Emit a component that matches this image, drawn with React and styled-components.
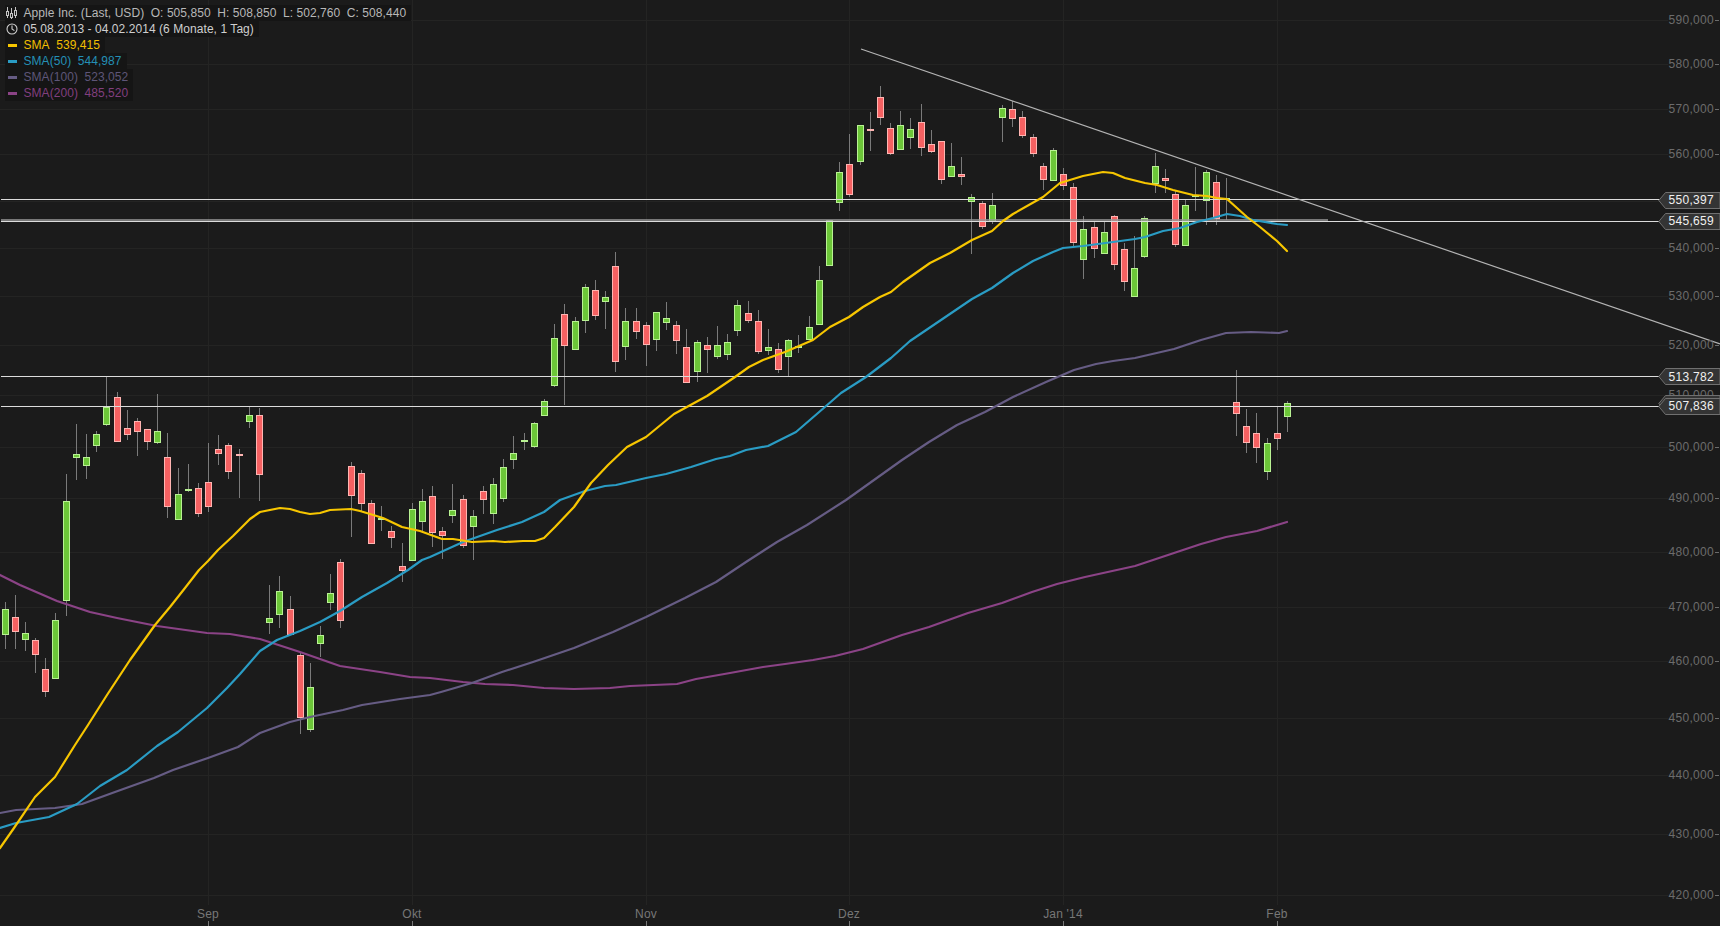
import React from 'react';
import styled, { createGlobalStyle } from 'styled-components';

const UP = 'u';
const DN = 'd';

// x, body top, body bottom, wick top, wick bottom, direction
const candles = [
  [5, 609, 635, 602, 649, UP], [15, 617, 632, 595, 649, DN], [25, 633, 640, 622, 651, UP],
  [35, 640, 655, 638, 673, DN], [45, 669, 692, 658, 697, DN], [55, 620, 679, 613, 679, UP],
  [66, 501, 601, 474, 616, UP], [76, 454, 458, 424, 480, UP], [86, 457, 466, 434, 479, UP],
  [96, 434, 446, 431, 452, UP], [106, 407, 425, 377, 426, UP], [117, 397, 442, 392, 442, DN],
  [127, 428, 435, 410, 440, DN], [137, 421, 432, 418, 456, DN], [147, 429, 442, 429, 450, DN],
  [157, 431, 443, 394, 444, UP], [167, 457, 507, 433, 518, DN], [178, 494, 520, 468, 520, UP],
  [188, 489, 491, 464, 492, UP], [198, 488, 514, 483, 517, DN], [208, 482, 507, 443, 512, DN],
  [218, 449, 454, 435, 465, DN], [228, 445, 472, 443, 479, DN], [239, 454, 456, 449, 498, DN],
  [249, 415, 422, 407, 428, UP], [259, 415, 475, 408, 501, DN], [269, 618, 623, 585, 634, UP],
  [279, 591, 615, 576, 628, UP], [290, 609, 635, 596, 635, DN], [300, 655, 718, 653, 734, DN],
  [310, 687, 730, 663, 732, UP], [320, 635, 644, 626, 657, UP], [330, 593, 603, 574, 610, UP],
  [340, 562, 621, 559, 628, DN], [351, 466, 496, 462, 537, DN], [361, 473, 504, 470, 511, DN],
  [371, 503, 544, 500, 544, DN], [381, 518, 520, 506, 531, UP], [391, 531, 538, 526, 548, DN],
  [402, 566, 571, 543, 582, DN], [412, 509, 561, 503, 561, UP], [422, 501, 522, 489, 533, UP],
  [432, 496, 533, 486, 547, DN], [442, 531, 536, 527, 559, DN], [452, 510, 516, 484, 523, UP],
  [463, 499, 546, 495, 548, DN], [473, 516, 527, 510, 560, UP], [483, 491, 500, 486, 514, DN],
  [493, 484, 514, 478, 524, UP], [503, 467, 499, 459, 502, UP], [513, 453, 460, 436, 469, UP],
  [524, 440, 442, 433, 450, UP], [534, 423, 447, 422, 448, UP], [544, 401, 416, 399, 416, UP],
  [554, 338, 386, 324, 387, UP], [564, 314, 346, 304, 405, DN], [575, 321, 350, 317, 350, UP],
  [585, 287, 321, 284, 333, UP], [595, 290, 316, 280, 320, DN], [605, 297, 302, 291, 329, UP],
  [615, 266, 362, 252, 372, DN], [625, 321, 347, 308, 360, UP], [636, 321, 332, 308, 339, DN],
  [646, 325, 345, 322, 366, DN], [656, 312, 340, 312, 351, UP], [666, 318, 323, 302, 330, UP],
  [676, 325, 341, 321, 354, DN], [686, 347, 383, 329, 383, DN], [697, 342, 372, 340, 382, UP],
  [707, 345, 350, 337, 373, DN], [717, 345, 357, 326, 359, UP], [727, 342, 355, 334, 360, UP],
  [737, 305, 331, 300, 336, UP], [748, 313, 321, 301, 323, DN], [758, 321, 352, 310, 354, DN],
  [768, 347, 351, 329, 355, UP], [778, 349, 370, 343, 373, DN], [788, 340, 357, 339, 376, UP],
  [798, 346, 348, 335, 353, UP], [809, 327, 340, 316, 340, UP], [819, 280, 325, 266, 325, UP],
  [829, 220, 266, 220, 266, UP], [839, 172, 203, 162, 211, UP], [849, 164, 195, 134, 197, DN],
  [860, 125, 162, 125, 165, UP], [870, 129, 131, 112, 151, DN], [880, 97, 118, 86, 125, DN],
  [890, 128, 154, 123, 155, DN], [900, 125, 150, 111, 150, UP], [910, 129, 138, 118, 149, UP],
  [921, 122, 148, 104, 156, DN], [931, 144, 152, 130, 153, DN], [941, 141, 180, 141, 184, DN],
  [951, 166, 177, 143, 177, UP], [961, 174, 177, 157, 185, DN], [971, 197, 202, 194, 254, UP],
  [982, 203, 227, 201, 229, DN], [992, 205, 222, 193, 224, UP], [1002, 108, 118, 105, 142, UP],
  [1012, 109, 119, 101, 127, DN], [1022, 117, 136, 111, 138, DN], [1033, 137, 154, 134, 157, DN],
  [1043, 166, 180, 163, 190, DN], [1053, 150, 181, 148, 181, UP], [1063, 174, 186, 168, 190, DN],
  [1073, 187, 243, 183, 246, DN], [1083, 229, 260, 216, 279, UP], [1094, 227, 249, 221, 258, DN],
  [1104, 232, 254, 221, 254, UP], [1114, 216, 265, 215, 270, DN], [1124, 249, 282, 243, 291, DN],
  [1134, 268, 297, 236, 297, UP], [1144, 218, 257, 216, 258, UP], [1155, 166, 184, 153, 193, UP],
  [1165, 178, 181, 169, 193, DN], [1175, 194, 245, 191, 247, DN], [1185, 205, 246, 199, 246, UP],
  [1195, 195, 197, 167, 211, UP], [1206, 172, 201, 170, 225, UP], [1216, 182, 219, 175, 225, DN],
  [1226, 198, 200, 178, 220, UP], [1236, 402, 414, 370, 436, DN], [1246, 426, 443, 409, 453, DN],
  [1256, 433, 448, 413, 463, DN], [1267, 443, 472, 438, 480, UP], [1277, 433, 439, 407, 450, DN],
  [1287, 403, 417, 401, 432, UP],
];

const sma = [
  0, 848, 14, 828, 35, 797, 55, 777, 75, 745, 88, 725, 107, 695, 130, 660, 155, 625, 170, 607, 185, 588,
  199, 570, 208, 561, 218, 550, 233, 536, 250, 519, 260, 512, 280, 508, 290, 509, 300, 512, 310, 514,
  320, 513, 330, 510, 351, 509, 360, 511, 370, 514, 383, 518, 402, 527, 420, 531, 442, 539, 453, 539,
  472, 542, 493, 541, 505, 542, 523, 541, 535, 541, 544, 538, 555, 527, 574, 507, 591, 483, 608, 465,
  627, 447, 646, 437, 674, 414, 707, 396, 735, 377, 749, 367, 763, 360, 785, 352, 813, 340, 830, 327,
  849, 317, 863, 307, 880, 297, 891, 292, 903, 282, 930, 263, 950, 253, 972, 240, 992, 231, 1003, 221,
  1013, 214, 1043, 197, 1060, 183, 1083, 176, 1103, 172, 1113, 173, 1125, 178, 1145, 183, 1157, 185,
  1173, 190, 1193, 195, 1207, 196, 1217, 198, 1227, 199, 1247, 217, 1260, 227, 1277, 241, 1287, 251,
];

const sma50 = [
  0, 828, 16, 823, 49, 817, 77, 804, 100, 786, 127, 770, 157, 746, 178, 732, 207, 708, 227, 688, 240, 674,
  260, 651, 277, 640, 300, 631, 320, 622, 340, 611, 362, 597, 387, 583, 408, 570, 422, 560, 430, 557,
  463, 542, 497, 530, 522, 522, 544, 512, 560, 500, 585, 491, 605, 486, 616, 485, 646, 478, 666, 474,
  691, 467, 716, 459, 730, 456, 746, 450, 768, 446, 796, 432, 818, 413, 841, 393, 866, 377, 891, 358,
  910, 341, 941, 320, 972, 299, 992, 288, 1013, 273, 1033, 261, 1053, 252, 1063, 248, 1083, 246,
  1113, 242, 1135, 239, 1145, 237, 1163, 231, 1180, 228, 1197, 222, 1213, 218, 1227, 214, 1240, 216,
  1253, 220, 1277, 224, 1287, 225,
];

const sma100 = [
  0, 813, 16, 810, 55, 808, 82, 804, 115, 792, 154, 778, 173, 770, 208, 758, 238, 747, 260, 733, 290, 722,
  310, 717, 343, 710, 362, 705, 400, 699, 430, 695, 441, 692, 472, 683, 502, 672, 533, 662, 574, 648,
  613, 632, 646, 617, 685, 598, 716, 582, 746, 562, 777, 542, 807, 525, 846, 500, 874, 480, 902, 460,
  929, 442, 957, 425, 985, 412, 1013, 397, 1046, 382, 1074, 370, 1096, 364, 1113, 361, 1135, 358,
  1174, 349, 1201, 340, 1226, 333, 1251, 332, 1279, 333, 1287, 331,
];

const sma200 = [
  0, 575, 20, 585, 57, 601, 90, 612, 117, 618, 157, 626, 207, 633, 230, 634, 260, 639, 300, 652, 340, 666,
  380, 672, 410, 677, 430, 678, 463, 682, 485, 684, 513, 685, 544, 688, 574, 689, 610, 688, 630, 686,
  677, 684, 696, 679, 730, 673, 763, 667, 785, 664, 813, 660, 835, 656, 863, 649, 902, 635, 929, 627,
  968, 613, 1002, 603, 1032, 592, 1057, 584, 1085, 577, 1135, 566, 1174, 553, 1201, 544, 1226, 537,
  1257, 531, 1287, 522,
];

const priceLabels = [
  ['590,000', 20], ['580,000', 64], ['570,000', 109], ['560,000', 154], ['540,000', 248],
  ['530,000', 296], ['520,000', 345], ['510,000', 395], ['500,000', 447], ['490,000', 498],
  ['480,000', 552], ['470,000', 607], ['460,000', 661], ['450,000', 718], ['440,000', 775],
  ['430,000', 834], ['420,000', 895],
];

const gridRows = [...priceLabels.map((p) => p[1]), 201];

const months = [
  ['Sep', 208], ['Okt', 412], ['Nov', 646], ['Dez', 849], ["Jan '14", 1063], ['Feb', 1277],
];

const levels = [199.5, 221.5, 376.5, 406.5];

// the tag at 403 is the last price, almost hidden behind 507,836
const tags = [
  ['550,397', 200],
  ['545,659', 221],
  ['513,782', 376.5],
  ['', 403],
  ['507,836', 406],
];

const indicators = [
  { name: 'SMA', value: '539,415', color: '#f2bf00', dash: '#f7c600' },
  { name: 'SMA(50)', value: '544,987', color: '#2490b5', dash: '#2a9cc4' },
  { name: 'SMA(100)', value: '523,052', color: '#5e5578', dash: '#665c84' },
  { name: 'SMA(200)', value: '485,520', color: '#823f7f', dash: '#8b4386' },
];

const toPoints = (list) => {
  const out = [];
  for (let i = 0; i < list.length; i += 2) out.push(`${list[i]},${list[i + 1]}`);
  return out.join(' ');
};

function App() {
  return (
    <>
      <GlobalStyle />
      <Frame>
        <ChartSvg viewBox="0 0 1720 926" width="1720" height="926">
          {gridRows.map((y) => (
            <line key={y} x1="0" x2="1668" y1={y + 0.5} y2={y + 0.5} stroke="#242423" />
          ))}
          {months.map(([m, x]) => (
            <g key={m}>
              <line x1={x + 0.5} x2={x + 0.5} y1="0" y2="905" stroke="#242423" />
              <line x1={x + 0.5} x2={x + 0.5} y1="921" y2="926" stroke="#777" />
            </g>
          ))}

          {candles.map(([x, top, bottom, wickTop, wickBottom, dir]) => (
            <g key={x}>
              <line x1={x + 0.5} x2={x + 0.5} y1={wickTop} y2={wickBottom} stroke="#7a7a7a" />
              <rect
                x={x - 2.5}
                y={top + 0.5}
                width="6"
                height={Math.max(bottom - top - 1, 1)}
                fill={dir === UP ? '#6cc638' : '#f56162'}
                stroke={dir === UP ? '#b9f293' : '#ffb5b2'}
              />
            </g>
          ))}

          <line x1="1" x2="1328" y1="220" y2="220" stroke="#989898" strokeWidth="1.6" />
          {levels.map((y) => (
            <line key={y} x1="1" x2="1660" y1={y} y2={y} stroke="#dcdcdc" />
          ))}
          <line x1="861" y1="49" x2="1720" y2="344" stroke="#b4b4b4" strokeWidth="1.2" />

          <SmaLine points={toPoints(sma200)} stroke="#8b4386" />
          <SmaLine points={toPoints(sma100)} stroke="#665c84" />
          <SmaLine points={toPoints(sma50)} stroke="#2a9cc4" />
          <SmaLine points={toPoints(sma)} stroke="#f7c600" />
        </ChartSvg>

        <Legend>
          <LegendRow>
            <IconSlot>
              <svg width="12" height="12" viewBox="0 0 12 12" fill="none" stroke="#c4c4c4">
                <path d="M1.5 0v11M5.5 1v11M9.5 0v11" />
                <rect x="0.5" y="4.5" width="2" height="4" fill="#1b1b1b" />
                <rect x="4.5" y="6.5" width="2" height="4" fill="#1b1b1b" />
                <rect x="8.5" y="3.5" width="2" height="5" fill="#1b1b1b" />
              </svg>
            </IconSlot>
            <Text>Apple Inc. (Last, USD)</Text>
            <Text>O: 505,850</Text>
            <Text>H: 508,850</Text>
            <Text>L: 502,760</Text>
            <Text>C: 508,440</Text>
          </LegendRow>
          <LegendRow>
            <IconSlot>
              <svg width="12" height="12" viewBox="0 0 12 12" fill="none" stroke="#d0d0d0" strokeWidth="1.1">
                <circle cx="6" cy="6" r="5" />
                <path d="M6 2.6V6l2.4 1.6" />
              </svg>
            </IconSlot>
            <Text $color="#cfcfcf">05.08.2013 - 04.02.2014 (6 Monate, 1 Tag)</Text>
          </LegendRow>
          {indicators.map((ind) => (
            <LegendRow key={ind.name}>
              <IconSlot>
                <Dash $color={ind.dash} />
              </IconSlot>
              <Text $color={ind.color}>{ind.name}</Text>
              <Text $color={ind.color}>{ind.value}</Text>
            </LegendRow>
          ))}
        </Legend>

        {priceLabels.map(([text, y]) => (
          <PriceLabel key={text} style={{ top: y }}>
            {text}
          </PriceLabel>
        ))}

        {tags.map(([text, y]) => (
          <PriceTag key={y} style={{ top: y }}>
            <TagShape viewBox="0 0 62 17" width="62" height="17">
              <polygon points="0.8,8.5 7.5,0.5 62,0.5 62,16.5 7.5,16.5" fill="#343434" stroke="#707070" />
            </TagShape>
            <TagText>{text}</TagText>
          </PriceTag>
        ))}

        {months.map(([m, x]) => (
          <MonthLabel key={m} style={{ left: x }}>
            {m}
          </MonthLabel>
        ))}
      </Frame>
    </>
  );
}

export default App;

const GlobalStyle = createGlobalStyle`
  html, body {
    margin: 0;
    padding: 0;
    background: #1b1b1b;
  }
`;

const Frame = styled.div`
  position: relative;
  width: 1720px;
  height: 926px;
  overflow: hidden;
  background: #1b1b1b;
  font-family: "Liberation Sans", Arial, sans-serif;
  font-size: 12px;
`;

const ChartSvg = styled.svg`
  display: block;
`;

const SmaLine = styled.polyline`
  fill: none;
  stroke-width: 2.2;
  stroke-linejoin: round;
  stroke-linecap: round;
`;

const Legend = styled.div`
  position: absolute;
  top: 5px;
  left: 5px;
  display: flex;
  flex-direction: column;
  align-items: flex-start;
`;

const LegendRow = styled.div`
  display: flex;
  align-items: center;
  gap: 6.5px;
  height: 16px;
  padding-right: 5px;
  background: #151515;
`;

const IconSlot = styled.span`
  display: flex;
  align-items: center;
  justify-content: center;
  width: 12px;
  height: 16px;
  margin-left: 1px;
  margin-right: -1px;
`;

const Text = styled.span`
  color: ${(p) => p.$color || '#b8b8b8'};
  letter-spacing: 0.06px;
  white-space: nowrap;
  line-height: 16px;
`;

const Dash = styled.span`
  display: block;
  width: 9px;
  height: 3px;
  background: ${(p) => p.$color};
`;

const PriceLabel = styled.div`
  position: absolute;
  right: 6px;
  transform: translateY(-50%);
  color: #6c6c6c;
  letter-spacing: 0.3px;
  line-height: 14px;

  &::after {
    content: "";
    position: absolute;
    left: 100%;
    top: 7px;
    margin-left: 1px;
    width: 4px;
    height: 1px;
    background: #6c6c6c;
  }
`;

const PriceTag = styled.div`
  position: absolute;
  right: 0;
  width: 62px;
  height: 17px;
  margin-top: -8.5px;
  display: flex;
  align-items: center;
  justify-content: flex-end;
  padding-right: 6px;
  box-sizing: border-box;
`;

const TagShape = styled.svg`
  position: absolute;
  left: 0;
  top: 0;
`;

const TagText = styled.span`
  position: relative;
  color: #f0f0f0;
  letter-spacing: 0.3px;
`;

const MonthLabel = styled.div`
  position: absolute;
  top: 907px;
  transform: translateX(-50%);
  color: #777;
  letter-spacing: 0.2px;
  white-space: nowrap;
`;
